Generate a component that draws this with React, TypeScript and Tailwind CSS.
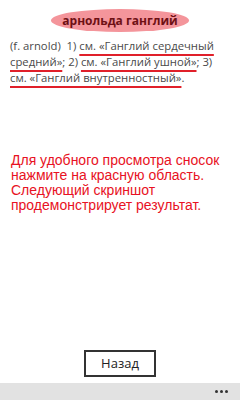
const link = "underline decoration-[#e0202a] decoration-2 underline-offset-[4px]";

export default function App() {
  return (
    <div className="w-[240px] h-[400px] bg-white flex flex-col font-['Open_Sans',sans-serif]">
      {/* TITLE */}
      <div className="flex justify-center pt-[9px]">
        <div className="w-[138px] h-[23px] rounded-[50%] bg-[#f4959b] flex items-center justify-center">
          <span className="text-[12px] font-bold text-[#6e1014] leading-none">арнольда ганглий</span>
        </div>
      </div>

      {/* ARTICLE */}
      <p className="px-[10px] mt-[6px] text-[11.3px] leading-[16px] text-[#4a4a4a] whitespace-nowrap">
        (f. arnold)&nbsp; 1) <span className={link}>см. «Ганглий сердечный<br />средний»</span>; 2){" "}
        <span className={link}>см. «Ганглий ушной»</span>; 3)
        <br />
        <span className={link}>см. «Ганглий внутренностный»</span>.
      </p>

      {/* HINT */}
      <p className="px-[11px] mt-[67px] text-[14px] leading-[15px] text-[#e81123] font-['Liberation_Sans',sans-serif]">
        Для удобного просмотра сносок
        <br />
        нажмите на красную область.
        <br />
        Следующий скриншот
        <br />
        продемонстрирует результат.
      </p>

      <div className="flex-1" />

      {/* BACK */}
      <div className="flex justify-center pb-[6px]">
        <button className="w-[72px] h-[27px] border-2 border-[#333] text-[13px] text-[#222]">Назад</button>
      </div>

      {/* APP BAR */}
      <div className="h-[17px] bg-[#e2e2e2] flex items-center justify-end pr-[12px] gap-[2px]">
        <span className="w-[3px] h-[3px] rounded-full bg-[#333]" />
        <span className="w-[3px] h-[3px] rounded-full bg-[#333]" />
        <span className="w-[3px] h-[3px] rounded-full bg-[#333]" />
      </div>
    </div>
  );
}
